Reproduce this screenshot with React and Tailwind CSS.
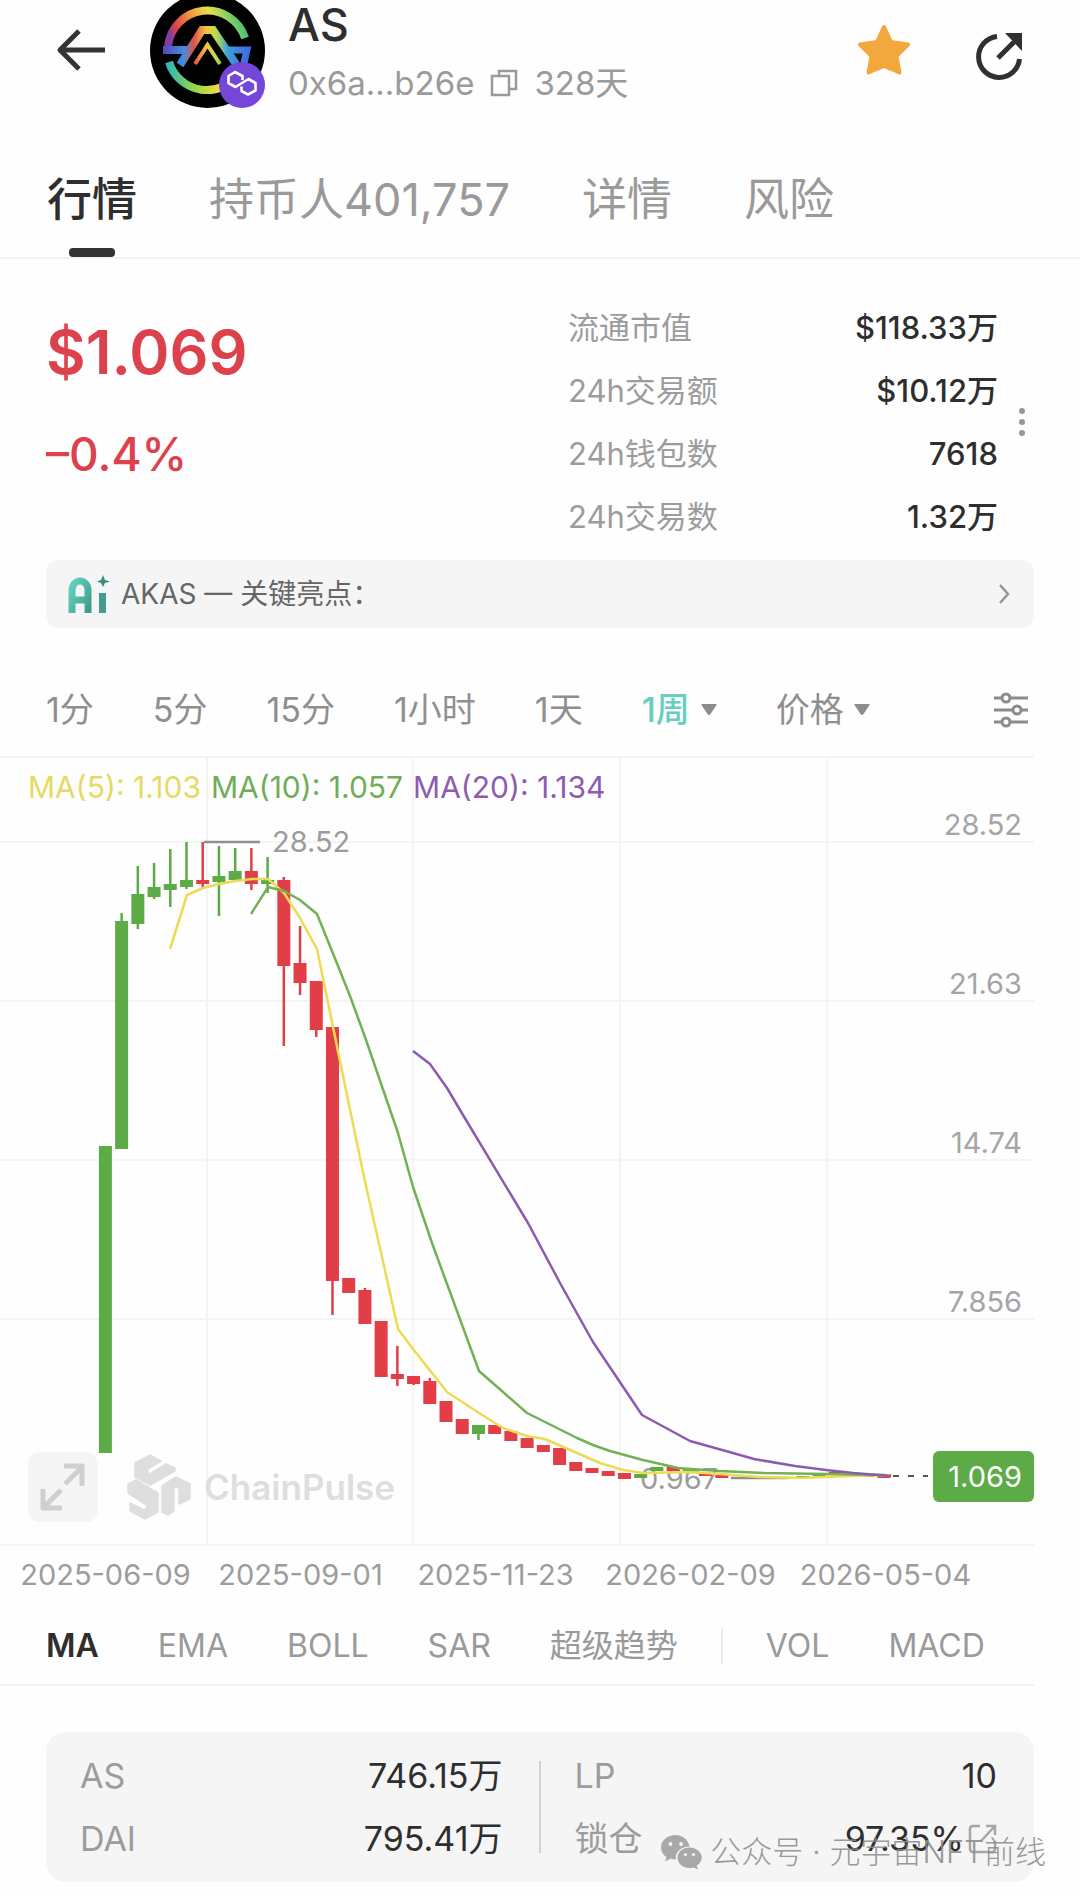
import { useState } from "react";

const tabs = ["行情", "持币人401,757", "详情", "风险"];

const stats = [
  { label: "流通市值", value: "$118.33万" },
  { label: "24h交易额", value: "$10.12万" },
  { label: "24h钱包数", value: "7618" },
  { label: "24h交易数", value: "1.32万" },
];

const periods = ["1分", "5分", "15分", "1小时", "1天"];
const mainIndicators = ["MA", "EMA", "BOLL", "SAR", "超级趋势"];
const subIndicators = ["VOL", "MACD"];
const dates = ["2025-06-09", "2025-09-01", "2025-11-23", "2026-02-09", "2026-05-04"];

const UP = "#5cab47";
const DOWN = "#e23e47";
const STEP = 16.22;

// body top, body bottom, high, low, rising
const candles = [
  [1146, 1453, 1146, 1453, 1],
  [921, 1149, 913, 1149, 1],
  [894, 924, 866, 929, 1],
  [887, 897, 863, 899, 1],
  [884, 890, 849, 907, 1],
  [880, 887, 842, 889, 1],
  [880, 884, 842, 888, 0],
  [876, 882, 846, 916, 1],
  [871, 880, 848, 880, 1],
  [871, 884, 848, 890, 0],
  [880, 884, 857, 893, 1],
  [880, 966, 877, 1046, 0],
  [963, 983, 926, 995, 0],
  [981, 1030, 981, 1037, 0],
  [1027, 1281, 1027, 1315, 0],
  [1278, 1293, 1278, 1293, 0],
  [1290, 1324, 1288, 1324, 0],
  [1321, 1377, 1321, 1377, 0],
  [1374, 1379, 1346, 1386, 0],
  [1376, 1384, 1376, 1385, 0],
  [1381, 1404, 1378, 1404, 0],
  [1401, 1422, 1401, 1422, 0],
  [1419, 1434, 1419, 1434, 0],
  [1425, 1434, 1425, 1440, 1],
  [1425, 1434, 1425, 1434, 0],
  [1431, 1441, 1431, 1441, 0],
  [1438, 1448, 1438, 1448, 0],
  [1445, 1452, 1445, 1452, 0],
  [1448, 1465, 1448, 1465, 0],
  [1462, 1471, 1462, 1471, 0],
  [1468, 1473, 1468, 1473, 0],
  [1471, 1476, 1471, 1476, 0],
  [1473, 1479, 1473, 1479, 0],
  [1474, 1478, 1474, 1478, 1],
  [1467, 1471, 1467, 1471, 1],
  [1467, 1471, 1467, 1471, 0],
  [1469, 1472, 1469, 1472, 1],
  [1473, 1476, 1473, 1476, 0],
  [1475, 1478, 1475, 1478, 0],
  [1477, 1479, 1477, 1479, 1],
  [1477, 1479, 1477, 1479, 0],
  [1477, 1479, 1477, 1479, 1],
  [1477, 1479, 1477, 1479, 0],
  [1476, 1478, 1476, 1478, 1],
  [1473, 1476, 1473, 1476, 1],
  [1472, 1475, 1472, 1475, 0],
  [1474, 1476, 1474, 1476, 1],
  [1475, 1477, 1475, 1477, 0],
  [1475, 1478, 1475, 1478, 0],
];

const ma5 =
  "170,949 187,895 203,888 219,884 235,881 252,879 268,879 284,893 300,918 317,949 333,1027 348,1100 364,1177 382,1257 398,1329 413,1349 432,1373 447,1392 479,1413 503,1428 527,1436 545,1439 577,1453 600,1463 623,1470 643,1473 690,1472 720,1474 760,1477 800,1478 850,1476 892,1475";
const ma10 =
  "251,914 268,887 284,891 300,900 317,914 334,956 350,996 365,1037 398,1133 413,1187 432,1243 479,1371 503,1392 527,1413 545,1422 577,1438 593,1445 610,1451 643,1460 678,1468 719,1471 764,1473 826,1474 886,1475";
const ma20 =
  "413,1051 430,1064 447,1088 463,1115 528,1223 560,1283 593,1342 642,1415 690,1441 740,1455 754,1459 795,1466 826,1470 853,1473 891,1476";

function CandleChart() {
  return (
    <svg viewBox="0 756 1080 790" className="block h-auto w-full" role="img" aria-label="AS 1周 K线">
      <g stroke="#f4f4f4" strokeWidth="2">
        {[757, 842, 1001, 1160, 1319, 1545].map((y) => (
          <line key={y} x1="0" x2="1034" y1={y} y2={y} />
        ))}
        {[207, 413, 620, 827].map((x) => (
          <line key={x} x1={x} x2={x} y1="757" y2="1545" />
        ))}
      </g>

      {/* brand mark */}
      <g fill="#dedede" stroke="#dedede" strokeWidth="1.5" strokeLinejoin="round">
        <path d="M135 1463 150 1455 161 1461 148 1469 148 1475 166 1464 175 1468 175 1471 150 1485 135 1477Z" />
        <path d="M128 1484 136 1480 158 1493 158 1512 145 1519 130 1511 130 1503 144 1510 148 1506 128 1493Z" />
        <path d="M162 1486 176 1477 190 1484 190 1499 179 1504 179 1488 174 1487 174 1511 168 1515 162 1512Z" />
      </g>
      <text x="204" y="1500" fontSize="35" fontWeight="600" fill="#dedede">
        ChainPulse
      </text>

      <text x="640" y="1489" fontSize="29" fill="#9c9c9c">
        0.967
      </text>

      {candles.map(([top, bottom, high, low, up], i) => {
        const x = 105.4 + i * STEP;
        return (
          <g key={i} fill={up ? UP : DOWN}>
            <rect x={x - 1.25} y={high} width="2.5" height={low - high} />
            <rect x={x - 6.5} y={top} width="13" height={bottom - top} />
          </g>
        );
      })}

      <path d="M204 842H260M731 1478H788" stroke="#8f8f8f" strokeWidth="2.5" />
      <g fill="none" strokeWidth="2.5" strokeLinejoin="round">
        <polyline points={ma5} stroke="#ecdb55" />
        <polyline points={ma10} stroke="#72b255" />
        <polyline points={ma20} stroke="#8c5bb0" />
      </g>
      <path d="M893 1476h35" stroke="#555" strokeWidth="2" strokeDasharray="6 9" />

      <g fontSize="29">
        <text x="272" y="852" fill="#9c9c9c">
          28.52
        </text>
        <g fill="#a5a5a5" textAnchor="end">
          <text x="1022" y="835">28.52</text>
          <text x="1022" y="994">21.63</text>
          <text x="1022" y="1153">14.74</text>
          <text x="1022" y="1312">7.856</text>
        </g>
        <rect x="933" y="1451" width="101" height="51" rx="6" fill={UP} />
        <text x="1022" y="1487" fill="#fff" textAnchor="end">
          1.069
        </text>
      </g>
    </svg>
  );
}

function TokenLogo() {
  return (
    <div className="relative size-[115px] shrink-0">
      <svg viewBox="0 0 115 115" className="size-full">
        <defs>
          <linearGradient id="ringTop" x1="0" x2="1" y1="0.6" y2="0.4">
            <stop offset="0" stopColor="#7a3fa0" />
            <stop offset="0.12" stopColor="#d9404a" />
            <stop offset="0.4" stopColor="#f3a03c" />
            <stop offset="0.62" stopColor="#e6e04a" />
            <stop offset="1" stopColor="#3fc07a" />
          </linearGradient>
          <linearGradient id="ringBottom" x1="0" x2="1">
            <stop offset="0" stopColor="#35b6b0" />
            <stop offset="0.35" stopColor="#8fd84a" />
            <stop offset="0.7" stopColor="#f1d944" />
            <stop offset="1" stopColor="#f08f3c" />
          </linearGradient>
          <linearGradient id="peak" gradientUnits="userSpaceOnUse" x1="14" x2="102" y1="60" y2="60">
            <stop offset="0" stopColor="#5a48b8" />
            <stop offset="0.22" stopColor="#3d8fe0" />
            <stop offset="0.34" stopColor="#e0504a" />
            <stop offset="0.48" stopColor="#f3c63e" />
            <stop offset="0.6" stopColor="#b9dc4a" />
            <stop offset="0.72" stopColor="#3da0d8" />
            <stop offset="1" stopColor="#3f62e0" />
          </linearGradient>
        </defs>
        <circle cx="57.5" cy="57.5" r="57.5" fill="#000" />
        <g fill="none" strokeWidth="8">
          <path d="M18 54A39.500 39.500 0 0 1 95 45" stroke="url(#ringTop)" />
          <path d="M19 69A39.500 39.500 0 0 0 90 79" stroke="url(#ringBottom)" />
          <path d="M13 57H39M30 72L52 37H63L86 71" stroke="url(#peak)" strokeWidth="8" />
          <path d="M76 57H97L94 70" stroke="url(#peak)" strokeWidth="7" />
          <path d="M45 71L57.500 52L70 71" stroke="url(#peak)" strokeWidth="4" />
        </g>
      </svg>
      <svg viewBox="0 0 46 46" className="absolute right-0 bottom-0 size-[46px]">
        <circle cx="23" cy="23" r="23" fill="#7447d8" />
        <path
          d="M23.500 18V14L16 10 9.500 14V21L16.500 25 29.500 17 36.500 21V28.500L29 32.500 22.500 29V24.500"
          fill="none"
          stroke="#fff"
          strokeWidth="2.6"
          strokeLinejoin="round"
        />
      </svg>
    </div>
  );
}

function Caret() {
  return (
    <svg viewBox="0 0 16 11" className="w-4" fill="#8c8c8c">
      <path d="M1 0h14q1 0 .5 1L9.500 10q-1.500 2-3 0L.5 1Q0 0 1 0Z" />
    </svg>
  );
}

function WechatIcon() {
  return (
    <svg viewBox="0 0 41 35" className="w-[41px]" fill="#a9a9a9">
      <path d="M14.500 0C6.500 0 0 5.500 0 12.500c0 4 2 7.300 5.500 9.600L4 26.500l5.300-2.700c1.700.5 3.400.7 5.700.7-1.500-7 5-13 13.500-13C27.500 5 21.500 0 14.500 0Z" />
      <path d="M28.500 12.500c-6.700 0-12 4.600-12 10.300s5.300 10.200 12 10.200c1.500 0 3-.2 4.300-.6L37 34.500l-1.200-4c3-1.900 5-4.700 5-7.800 0-5.600-5.500-10.200-12.300-10.200Z" />
      <g fill="#f5f5f5">
        <circle cx="9.500" cy="9" r="1.900" />
        <circle cx="20" cy="9" r="1.900" />
        <circle cx="24.500" cy="19.500" r="1.600" />
        <circle cx="32.500" cy="19.500" r="1.600" />
      </g>
    </svg>
  );
}

export default function App() {
  const [tab, setTab] = useState("行情");
  const [indicator, setIndicator] = useState("MA");

  return (
    <main className="min-h-screen overflow-hidden bg-[#fefefe] pb-[14px] font-['Inter','Noto_Sans_CJK_SC',sans-serif] text-[#2e2e2e]">
      <header className="flex h-[100px] items-center pr-[58px] pl-14">
        <button aria-label="返回" className="mr-[45px]">
          <svg viewBox="0 0 49 42" className="w-[49px]" fill="none" stroke="#333" strokeWidth="5">
            <path d="M49 21H4M23 2 4 21 23 40" strokeLinejoin="round" />
          </svg>
        </button>
        <TokenLogo />
        <div className="ml-[23px] self-start">
          <h1 className="text-[45px] leading-[50px] font-medium">AS</h1>
          <div className="mt-2 flex items-center text-[33px] leading-[50px] text-[#9a9a9a]">
            <span>0x6a...b26e</span>
            <button aria-label="复制" className="mx-4">
              <svg viewBox="0 0 28 28" className="w-7" fill="none" stroke="#9a9a9a" strokeWidth="2.500">
                <path d="M2 7h17v19H2zM9 7V2h17v18h-7" />
              </svg>
            </button>
            <span>328天</span>
          </div>
        </div>
        <button aria-label="收藏" className="ml-auto">
          <svg viewBox="0 0 52 50" className="w-[52px]" fill="#f2a83c" stroke="#f2a83c" strokeWidth="4" strokeLinejoin="round">
            <path d="M26 2 33 17 50 19.500 38.500 31 41.500 47.500 26 41 10.500 47.500 13.500 31 2 19.500 19 17Z" />
          </svg>
        </button>
        <button aria-label="分享" className="mt-3 ml-[66px]">
          <svg viewBox="0 0 46 47" className="w-[46px]" fill="none" stroke="#303030" strokeWidth="5">
            <path d="M21 3.500A20.500 20.500 0 1 0 43.500 26M22 25 38 9" />
            <path d="M29 0H46V18Z" fill="#303030" stroke="none" />
          </svg>
        </button>
      </header>

      <nav className="mt-[70px] flex gap-[72px] border-b-2 border-[#f2f2f2] pl-[47px]">
        {tabs.map((name) => (
          <button
            key={name}
            onClick={() => setTab(name)}
            className={
              name === tab
                ? "relative h-[87px] pb-[27px] text-[45px] leading-[60px] font-medium whitespace-nowrap"
                : "relative h-[87px] pb-[27px] text-[45px] leading-[60px] whitespace-nowrap text-[#9a9a9a]"
            }
          >
            {name}
            {name === tab && (
              <span className="absolute bottom-0 left-1/2 h-[9px] w-[46px] -translate-x-1/2 rounded bg-[#333]" />
            )}
          </button>
        ))}
      </nav>

      <section className="mt-[37px] flex justify-between px-[46px]">
        <div className="pt-4 text-[#dc424b]">
          <p className="text-[61px] leading-[80px] font-semibold">$1.069</p>
          <p className="mt-8 text-[46px] leading-[60px] font-medium">–0.4%</p>
        </div>
        <div className="flex items-center">
          <dl className="w-[430px] text-[31px] leading-[63px]">
            {stats.map((s) => (
              <div key={s.label} className="flex justify-between">
                <dt className="text-[#9c9c9c]">{s.label}</dt>
                <dd className="font-medium">{s.value}</dd>
              </div>
            ))}
          </dl>
          <button aria-label="更多" className="mr-1 ml-4 w-4">
            <svg viewBox="0 0 16 30" fill="#969696">
              <circle cx="8" cy="4" r="3" />
              <circle cx="8" cy="15" r="3" />
              <circle cx="8" cy="26" r="3" />
            </svg>
          </button>
        </div>
      </section>

      <a
        href="#highlights"
        className="mx-[46px] mt-3 flex h-[68px] items-center rounded-xl bg-[#f5f5f5] pr-6 pl-[22px] text-[28px] text-[#666]"
      >
        <svg viewBox="0 0 42 38" className="mr-[11px] w-[42px]" fill="none">
          <defs>
            <linearGradient id="ai" x1="0" x2="1" y1="0" y2="1">
              <stop offset="0" stopColor="#62d3bf" />
              <stop offset="1" stopColor="#3f9c8c" />
            </linearGradient>
          </defs>
          <path d="M4 38V15a8 9 0 0 1 16 0V38M4 25H20" stroke="url(#ai)" strokeWidth="7" />
          <path d="M31 18h7v20h-7z" fill="#459c8e" />
          <path d="M35 0 37 5 42 6.500 37 8 35 12 33 8 29 6.500 33 5Z" fill="#36907f" />
        </svg>
        AKAS — 关键亮点：
        <svg viewBox="0 0 11 20" className="ml-auto w-[11px]" fill="none" stroke="#969696" strokeWidth="2.500">
          <path d="M1 1 9 10 1 19" />
        </svg>
      </a>

      <div className="mt-[35px] flex h-[93px] items-center gap-[59px] pr-[52px] pl-[46px] text-[34px] whitespace-nowrap text-[#8f8f8f]">
        {periods.map((p) => (
          <button key={p}>{p}</button>
        ))}
        <label className="flex items-center gap-[10px]">
          <select aria-label="周期" className="appearance-none bg-transparent font-medium text-[#66cfc0]">
            <option>1周</option>
          </select>
          <Caret />
        </label>
        <label className="flex items-center gap-[10px]">
          <select aria-label="类型" className="appearance-none bg-transparent">
            <option>价格</option>
          </select>
          <Caret />
        </label>
        <button aria-label="设置" className="ml-auto">
          <svg viewBox="0 0 34 36" className="w-[34px]" fill="#fefefe" stroke="#8c8c8c" strokeWidth="3">
            <path d="M0 6H34M0 18H34M0 30H34" />
            <circle cx="12" cy="6" r="4" />
            <circle cx="23" cy="18" r="4" />
            <circle cx="12" cy="30" r="4" />
          </svg>
        </button>
      </div>

      <div className="relative">
        <CandleChart />
        <div className="absolute top-[11px] left-7 flex gap-[10px] text-[30px] leading-10 whitespace-nowrap">
          <span className="text-[#e6db62]">MA(5): 1.103</span>
          <span className="text-[#6fae57]">MA(10): 1.057</span>
          <span className="text-[#8d5cb0]">MA(20): 1.134</span>
        </div>
        <button
          aria-label="全屏"
          className="absolute bottom-6 left-7 flex size-[70px] items-center justify-center rounded-xl bg-[#f5f5f5]"
        >
          <svg viewBox="0 0 46 48" className="w-[46px]" fill="none" stroke="#cfcfcf" strokeWidth="5">
            <path d="M24 3H42V23M42 4 25 21M3 26V45H22M4 44 21 27" strokeLinejoin="round" />
          </svg>
        </button>
      </div>

      <div className="mr-[97px] ml-2 grid grid-cols-5 pt-[9px] text-center text-[29px] leading-10 whitespace-nowrap text-[#9c9c9c]">
        {dates.map((d) => (
          <time key={d}>{d}</time>
        ))}
      </div>

      <div className="mr-[46px] flex h-[91px] items-center gap-[59px] border-b-2 border-[#f2f2f2] pt-3 pl-[46px] text-[32px] whitespace-nowrap text-[#9a9a9a]">
        {mainIndicators.map((name) => (
          <button
            key={name}
            onClick={() => setIndicator(name)}
            className={name === indicator ? "font-semibold text-[#2e2e2e]" : ""}
          >
            {name}
          </button>
        ))}
        <span className="-mx-4 h-9 w-0.5 bg-[#ececec]" />
        {subIndicators.map((name) => (
          <button key={name}>{name}</button>
        ))}
      </div>

      <section className="relative mx-[46px] mt-[46px] flex items-center rounded-[20px] bg-[#f5f5f5] py-3 pr-[37px] pl-[34px] text-[34px] leading-[63px]">
        <dl className="flex-1">
          <div className="flex justify-between">
            <dt className="text-[#9c9c9c]">AS</dt>
            <dd>746.15万</dd>
          </div>
          <div className="flex justify-between">
            <dt className="text-[#9c9c9c]">DAI</dt>
            <dd>795.41万</dd>
          </div>
        </dl>
        <span className="mr-[34px] ml-9 h-[92px] w-0.5 bg-[#d2d2d2]" />
        <dl className="flex-1">
          <div className="flex justify-between">
            <dt className="text-[#9c9c9c]">LP</dt>
            <dd>10</dd>
          </div>
          <div className="flex justify-between">
            <dt className="text-[#9c9c9c]">锁仓</dt>
            <dd className="flex items-center gap-1">
              97.35%
              <svg viewBox="0 0 29 30" className="w-[29px]" fill="none" stroke="#a6a6a6" strokeWidth="2.500">
                <path d="M12 2H5Q2 2 2 5V25Q2 28 5 28H24Q27 28 27 25V17M18 2H27V11M27 2 13 17" />
              </svg>
            </dd>
          </div>
        </dl>
        <div className="absolute -right-3 bottom-[10px] flex items-center gap-2 text-[31px] leading-10 font-light whitespace-nowrap text-[#8c8c8c]/90">
          <WechatIcon />
          公众号 · 元宇宙NFT前线
        </div>
      </section>
    </main>
  );
}
